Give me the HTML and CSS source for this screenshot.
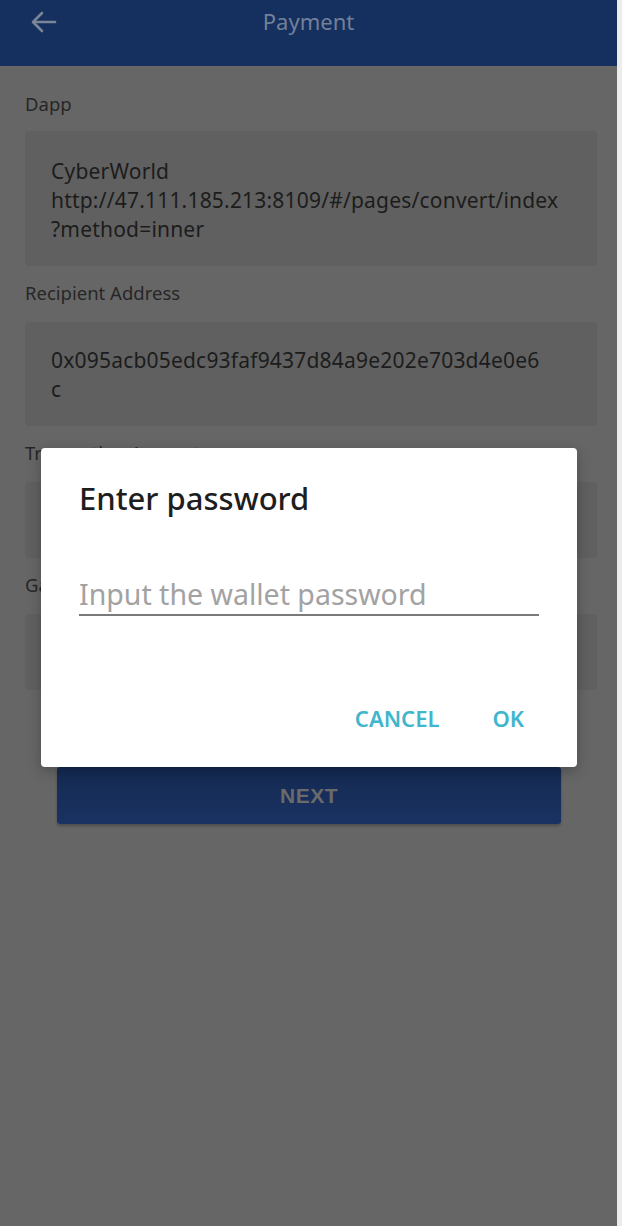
FILE: index.html
```html
<!DOCTYPE html>
<html lang="en">
<head>
<meta charset="utf-8">
<title>Payment</title>
<link rel="stylesheet" href="styles.css">
</head>
<body>
<div class="shell">
  <div class="screen">
    <header class="topbar">
      <span class="back">
        <svg width="26" height="22" viewBox="0 0 26 22" fill="none" stroke="#7a8598" stroke-width="2.6" stroke-linecap="round" stroke-linejoin="round">
          <path d="M24 11H3"/>
          <path d="M11 2L2 11l9 9"/>
        </svg>
      </span>
      <h1 class="title">Payment</h1>
    </header>

    <main class="form">
      <section class="group">
        <div class="label">Dapp</div>
        <div class="field tall">
          <div>CyberWorld</div>
          <div>http://47.111.185.213:8109/#/pages/convert/index</div>
          <div>?method=inner</div>
        </div>
      </section>
      <section class="group">
        <div class="label">Recipient Address</div>
        <div class="field addr">
          <div>0x095acb05edc93faf9437d84a9e202e703d4e0e6</div>
          <div>c</div>
        </div>
      </section>
      <section class="group">
        <div class="label">Transaction Amount</div>
        <div class="field short"></div>
      </section>
      <section class="group">
        <div class="label">Gas</div>
        <div class="field short"></div>
      </section>
      <div class="actions">
        <button class="next">NEXT</button>
      </div>
    </main>

    <div class="backdrop">
      <div class="dialog">
        <div class="dlg-title">Enter password</div>
        <div class="dlg-input">Input the wallet password</div>
        <div class="dlg-buttons">
          <span class="dlg-btn">CANCEL</span>
          <span class="dlg-btn">OK</span>
        </div>
      </div>
    </div>
  </div>
  <div class="edge"></div>
</div>
</body>
</html>
```

FILE: styles.css
```css
* { box-sizing: border-box; }
html, body { margin: 0; padding: 0; }
body {
  width: 622px;
  height: 1226px;
  overflow: hidden;
  font-family: "Noto Sans", "Open Sans", sans-serif;
  background: #666666;
}
.shell {
  display: flex;
  height: 1226px;
}
.screen {
  position: relative;
  width: 617px;
  height: 1226px;
  background: #666666;
}
.edge {
  width: 5px;
  background: #ececec;
}
.topbar {
  height: 66px;
  background: #15305e;
  display: flex;
  align-items: flex-start;
  position: relative;
}
.back {
  position: absolute;
  left: 31px;
  top: 11px;
  display: flex;
}
.title {
  margin: 0;
  width: 100%;
  text-align: center;
  font-size: 22px;
  font-weight: 400;
  line-height: 43px;
  color: #72809a;
}
.form {
  padding: 0 20px 0 25px;
  display: flex;
  flex-direction: column;
}
.group {
  display: flex;
  flex-direction: column;
}
.label {
  font-size: 18.5px;
  line-height: 22px;
  color: #262626;
  margin-top: 16px;
  height: 40px;
}
.group:first-child .label {
  margin-top: 27px;
  height: 38px;
}
.field {
  background: #606060;
  border-radius: 4px;
  padding: 25.5px 26px 0;
  font-size: 21px;
  letter-spacing: 0.2px;
  line-height: 29px;
  color: #1c1c1c;
}
.field.tall { height: 135px; }
.field.addr { height: 104px; padding-top: 23.5px; }
.field.short { height: 76px; }
.actions {
  display: flex;
  padding: 77px 0 0 32px;
}
.next {
  width: 504px;
  height: 57px;
  border: none;
  border-radius: 3px;
  background: linear-gradient(180deg, #142a52 0%, #1a3262 100%);
  color: #6a6a6a;
  font-family: "Liberation Sans", Arial, sans-serif;
  font-size: 21px;
  font-weight: 700;
  letter-spacing: 0.5px;
  box-shadow: 0 2px 3px rgba(0,0,0,0.25);
}
.backdrop {
  position: absolute;
  inset: 0;
  display: flex;
  align-items: flex-start;
  padding: 448px 0 0 41px;
}
.dialog {
  width: 536px;
  height: 319px;
  background: #ffffff;
  border-radius: 4px;
  box-shadow: 0 4px 14px rgba(0,0,0,0.25);
  padding: 30px 38px 0 38px;
  display: flex;
  flex-direction: column;
}
.dlg-title {
  font-size: 31px;
  font-weight: 500;
  color: #1e1e1e;
  line-height: 40px;
}
.dlg-input {
  margin-top: 56px;
  font-size: 28.5px;
  line-height: 40px;
  color: #a2a2a2;
  border-bottom: 2px solid #7a7a7a;
}
.dlg-buttons {
  margin-top: 88px;
  display: flex;
  justify-content: flex-end;
  gap: 53px;
  padding-right: 15px;
}
.dlg-btn {
  font-size: 22px;
  font-weight: 600;
  color: #40b6cc;
  line-height: 28px;
}
```
